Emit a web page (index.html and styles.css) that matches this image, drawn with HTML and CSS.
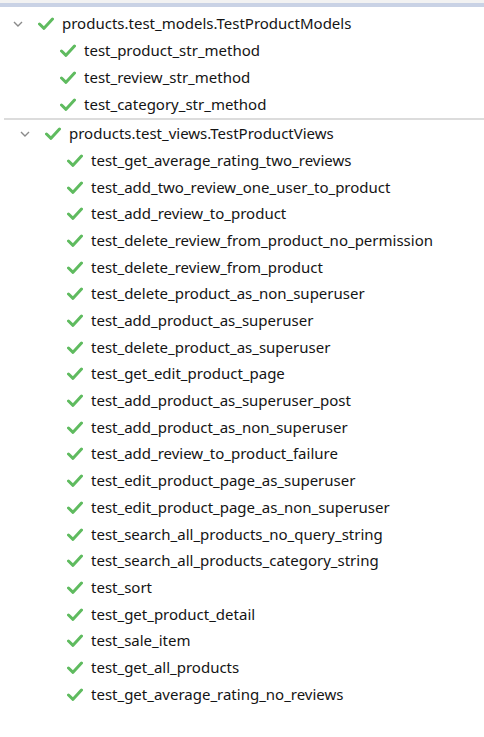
FILE: index.html
```html
<!DOCTYPE html>
<html>
<head>
<meta charset="utf-8">
<link rel="stylesheet" href="styles.css">
</head>
<body>
<div class="topbar"><div class="tabs"></div><div class="band"></div></div>
<div class="tree">
  <div class="group g1">
    <div class="row header">
      <svg class="chev" viewBox="0 0 10 6" width="10" height="6"><path d="M1 1 L5 5 L9 1" fill="none" stroke="#8a8a8a" stroke-width="1.4"/></svg>
      <svg class="check" viewBox="0 0 16 13" width="16" height="13"><path d="M1.5 7 L6 11.3 L14.5 2" fill="none" stroke="#5fbb5f" stroke-width="3" stroke-linecap="round" stroke-linejoin="round"/></svg>
      <span>products.test_models.TestProductModels</span>
    </div>
    <div class="row child"><svg class="check" viewBox="0 0 16 13" width="16" height="13"><path d="M1.5 7 L6 11.3 L14.5 2" fill="none" stroke="#5fbb5f" stroke-width="3" stroke-linecap="round" stroke-linejoin="round"/></svg><span>test_product_str_method</span></div>
    <div class="row child"><svg class="check" viewBox="0 0 16 13" width="16" height="13"><path d="M1.5 7 L6 11.3 L14.5 2" fill="none" stroke="#5fbb5f" stroke-width="3" stroke-linecap="round" stroke-linejoin="round"/></svg><span>test_review_str_method</span></div>
    <div class="row child"><svg class="check" viewBox="0 0 16 13" width="16" height="13"><path d="M1.5 7 L6 11.3 L14.5 2" fill="none" stroke="#5fbb5f" stroke-width="3" stroke-linecap="round" stroke-linejoin="round"/></svg><span>test_category_str_method</span></div>
  </div>
  <div class="sep"></div>
  <div class="group g2">
    <div class="row header">
      <svg class="chev" viewBox="0 0 10 6" width="10" height="6"><path d="M1 1 L5 5 L9 1" fill="none" stroke="#8a8a8a" stroke-width="1.4"/></svg>
      <svg class="check" viewBox="0 0 16 13" width="16" height="13"><path d="M1.5 7 L6 11.3 L14.5 2" fill="none" stroke="#5fbb5f" stroke-width="3" stroke-linecap="round" stroke-linejoin="round"/></svg>
      <span>products.test_views.TestProductViews</span>
    </div>
    <div class="row child"><svg class="check" viewBox="0 0 16 13" width="16" height="13"><path d="M1.5 7 L6 11.3 L14.5 2" fill="none" stroke="#5fbb5f" stroke-width="3" stroke-linecap="round" stroke-linejoin="round"/></svg><span>test_get_average_rating_two_reviews</span></div>
    <div class="row child"><svg class="check" viewBox="0 0 16 13" width="16" height="13"><path d="M1.5 7 L6 11.3 L14.5 2" fill="none" stroke="#5fbb5f" stroke-width="3" stroke-linecap="round" stroke-linejoin="round"/></svg><span>test_add_two_review_one_user_to_product</span></div>
    <div class="row child"><svg class="check" viewBox="0 0 16 13" width="16" height="13"><path d="M1.5 7 L6 11.3 L14.5 2" fill="none" stroke="#5fbb5f" stroke-width="3" stroke-linecap="round" stroke-linejoin="round"/></svg><span>test_add_review_to_product</span></div>
    <div class="row child"><svg class="check" viewBox="0 0 16 13" width="16" height="13"><path d="M1.5 7 L6 11.3 L14.5 2" fill="none" stroke="#5fbb5f" stroke-width="3" stroke-linecap="round" stroke-linejoin="round"/></svg><span>test_delete_review_from_product_no_permission</span></div>
    <div class="row child"><svg class="check" viewBox="0 0 16 13" width="16" height="13"><path d="M1.5 7 L6 11.3 L14.5 2" fill="none" stroke="#5fbb5f" stroke-width="3" stroke-linecap="round" stroke-linejoin="round"/></svg><span>test_delete_review_from_product</span></div>
    <div class="row child"><svg class="check" viewBox="0 0 16 13" width="16" height="13"><path d="M1.5 7 L6 11.3 L14.5 2" fill="none" stroke="#5fbb5f" stroke-width="3" stroke-linecap="round" stroke-linejoin="round"/></svg><span>test_delete_product_as_non_superuser</span></div>
    <div class="row child"><svg class="check" viewBox="0 0 16 13" width="16" height="13"><path d="M1.5 7 L6 11.3 L14.5 2" fill="none" stroke="#5fbb5f" stroke-width="3" stroke-linecap="round" stroke-linejoin="round"/></svg><span>test_add_product_as_superuser</span></div>
    <div class="row child"><svg class="check" viewBox="0 0 16 13" width="16" height="13"><path d="M1.5 7 L6 11.3 L14.5 2" fill="none" stroke="#5fbb5f" stroke-width="3" stroke-linecap="round" stroke-linejoin="round"/></svg><span>test_delete_product_as_superuser</span></div>
    <div class="row child"><svg class="check" viewBox="0 0 16 13" width="16" height="13"><path d="M1.5 7 L6 11.3 L14.5 2" fill="none" stroke="#5fbb5f" stroke-width="3" stroke-linecap="round" stroke-linejoin="round"/></svg><span>test_get_edit_product_page</span></div>
    <div class="row child"><svg class="check" viewBox="0 0 16 13" width="16" height="13"><path d="M1.5 7 L6 11.3 L14.5 2" fill="none" stroke="#5fbb5f" stroke-width="3" stroke-linecap="round" stroke-linejoin="round"/></svg><span>test_add_product_as_superuser_post</span></div>
    <div class="row child"><svg class="check" viewBox="0 0 16 13" width="16" height="13"><path d="M1.5 7 L6 11.3 L14.5 2" fill="none" stroke="#5fbb5f" stroke-width="3" stroke-linecap="round" stroke-linejoin="round"/></svg><span>test_add_product_as_non_superuser</span></div>
    <div class="row child"><svg class="check" viewBox="0 0 16 13" width="16" height="13"><path d="M1.5 7 L6 11.3 L14.5 2" fill="none" stroke="#5fbb5f" stroke-width="3" stroke-linecap="round" stroke-linejoin="round"/></svg><span>test_add_review_to_product_failure</span></div>
    <div class="row child"><svg class="check" viewBox="0 0 16 13" width="16" height="13"><path d="M1.5 7 L6 11.3 L14.5 2" fill="none" stroke="#5fbb5f" stroke-width="3" stroke-linecap="round" stroke-linejoin="round"/></svg><span>test_edit_product_page_as_superuser</span></div>
    <div class="row child"><svg class="check" viewBox="0 0 16 13" width="16" height="13"><path d="M1.5 7 L6 11.3 L14.5 2" fill="none" stroke="#5fbb5f" stroke-width="3" stroke-linecap="round" stroke-linejoin="round"/></svg><span>test_edit_product_page_as_non_superuser</span></div>
    <div class="row child"><svg class="check" viewBox="0 0 16 13" width="16" height="13"><path d="M1.5 7 L6 11.3 L14.5 2" fill="none" stroke="#5fbb5f" stroke-width="3" stroke-linecap="round" stroke-linejoin="round"/></svg><span>test_search_all_products_no_query_string</span></div>
    <div class="row child"><svg class="check" viewBox="0 0 16 13" width="16" height="13"><path d="M1.5 7 L6 11.3 L14.5 2" fill="none" stroke="#5fbb5f" stroke-width="3" stroke-linecap="round" stroke-linejoin="round"/></svg><span>test_search_all_products_category_string</span></div>
    <div class="row child"><svg class="check" viewBox="0 0 16 13" width="16" height="13"><path d="M1.5 7 L6 11.3 L14.5 2" fill="none" stroke="#5fbb5f" stroke-width="3" stroke-linecap="round" stroke-linejoin="round"/></svg><span>test_sort</span></div>
    <div class="row child"><svg class="check" viewBox="0 0 16 13" width="16" height="13"><path d="M1.5 7 L6 11.3 L14.5 2" fill="none" stroke="#5fbb5f" stroke-width="3" stroke-linecap="round" stroke-linejoin="round"/></svg><span>test_get_product_detail</span></div>
    <div class="row child"><svg class="check" viewBox="0 0 16 13" width="16" height="13"><path d="M1.5 7 L6 11.3 L14.5 2" fill="none" stroke="#5fbb5f" stroke-width="3" stroke-linecap="round" stroke-linejoin="round"/></svg><span>test_sale_item</span></div>
    <div class="row child"><svg class="check" viewBox="0 0 16 13" width="16" height="13"><path d="M1.5 7 L6 11.3 L14.5 2" fill="none" stroke="#5fbb5f" stroke-width="3" stroke-linecap="round" stroke-linejoin="round"/></svg><span>test_get_all_products</span></div>
    <div class="row child"><svg class="check" viewBox="0 0 16 13" width="16" height="13"><path d="M1.5 7 L6 11.3 L14.5 2" fill="none" stroke="#5fbb5f" stroke-width="3" stroke-linecap="round" stroke-linejoin="round"/></svg><span>test_get_average_rating_no_reviews</span></div>
  </div>
</div>
</body>
</html>
```
FILE: styles.css
```css
html, body {
  margin: 0;
  padding: 0;
  background: #ffffff;
}
body {
  font-family: "Noto Sans", "Open Sans", sans-serif;
  font-size: 15px;
  color: #141414;
}
.topbar .tabs {
  height: 3px;
  background: #f2f2f2;
}
.topbar .band {
  height: 4px;
  background: #c9d2e5;
}
.tree {
  padding-top: 3.4px;
}
.row {
  display: flex;
  align-items: center;
  height: 26.7px;
  white-space: nowrap;
}
.g1 .row {
  height: 27px;
}
.row span {
  line-height: 1;
}
.chev {
  flex: none;
  margin-right: 15px;
}
.check {
  flex: none;
  margin-right: 8px;
}
.g1 .header { padding-left: 13px; }
.g1 .child { padding-left: 60px; }
.g2 .header { padding-left: 20px; }
.g2 .child { padding-left: 67px; }
.sep {
  height: 2px;
  margin-left: 4px;
  background: #dcdcdc;
}
```
